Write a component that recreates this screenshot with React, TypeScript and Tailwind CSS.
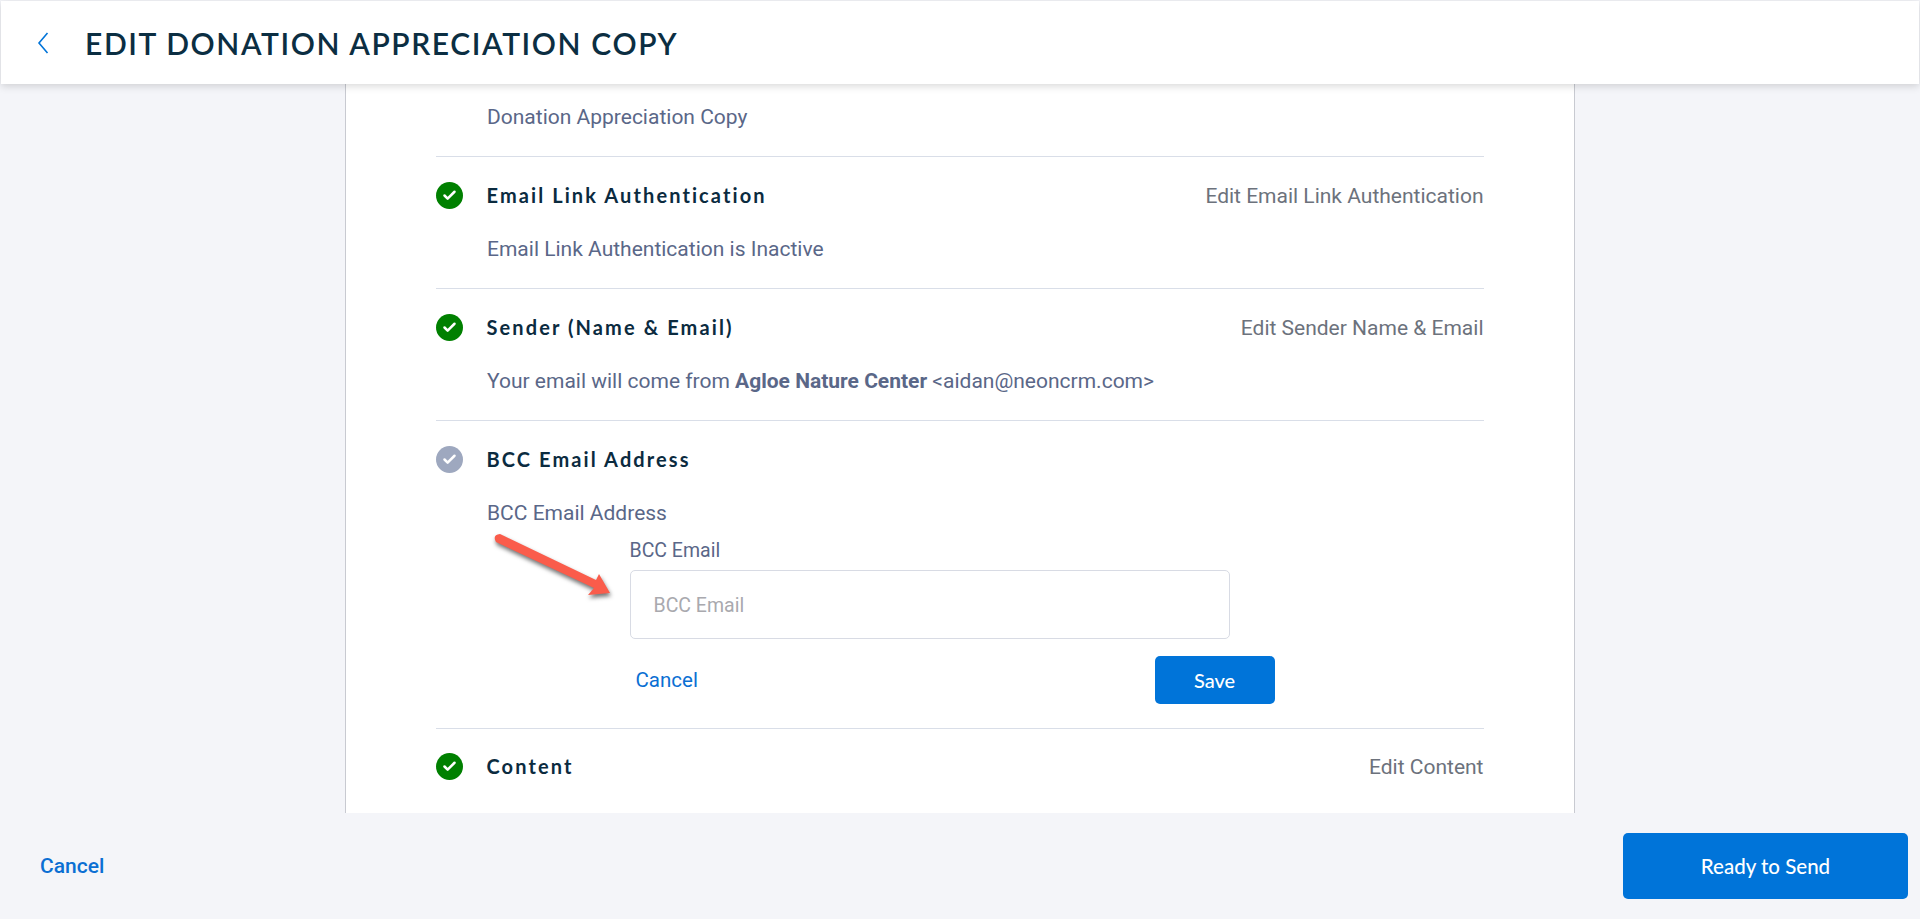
import { Check } from "lucide-react";

function StatusIcon({ muted }: { muted?: boolean }) {
  return (
    <span
      className={`-mt-px flex h-[27px] w-[27px] shrink-0 items-center justify-center rounded-full ${
        muted ? "bg-[#9ea8bf]" : "bg-[#008000]"
      }`}
    >
      <Check className="h-[15px] w-[15px] text-white" strokeWidth={4} />
    </span>
  );
}

function RowHead({ title, edit, muted }: { title: string; edit?: string; muted?: boolean }) {
  return (
    <div className="flex h-[28px] items-center">
      <StatusIcon muted={muted} />
      <h3 className="ml-[24px] pb-[2px] font-['Lato',sans-serif] text-[20px] font-bold tracking-[2.1px] text-[#0b2b3f]">
        {title}
      </h3>
      {edit && <a className="ml-auto pt-[2px] text-[21px] text-[#6c727c]">{edit}</a>}
    </div>
  );
}

function Arrow() {
  return (
    <svg
      className="absolute left-[55px] top-[112px] drop-shadow-[1px_3px_2px_rgba(0,0,0,0.55)]"
      width="126"
      height="70"
      viewBox="0 0 126 70"
      fill="none"
    >
      <path d="M5 9 L103 55 L97 62 L119 60 L108 41 L105 47 L9 1 Q1 2 5 9 Z" fill="#fa5c4b" />
    </svg>
  );
}

export default function App() {
  return (
    <div className="flex h-screen flex-col overflow-hidden bg-[#f4f5f9] font-['Roboto',sans-serif]">
      <header className="relative z-10 mx-px mt-px flex h-[83px] shrink-0 items-center bg-white pl-[36px] shadow-[0_2px_8px_rgba(0,0,0,0.16)]">
        <svg width="12" height="28" viewBox="0 0 12 28" fill="none" className="mt-[1px]">
          <path d="M10.5 4 L2 14 L10.5 24" stroke="#0074d9" strokeWidth="1.6" />
        </svg>
        <h1 className="ml-[36px] pt-px font-['Lato',sans-serif] text-[30px] font-semibold tracking-[1.6px] text-[#0b2e42]">
          EDIT DONATION APPRECIATION COPY
        </h1>
      </header>

      <main className="flex min-h-0 flex-1 justify-center overflow-hidden pr-[1px]">
        <div className="h-full w-[1230px] border-x border-[#c8cad1] bg-white px-[90px]">
          <div className="flex h-[73px] items-end border-b border-[#d9dee8] pb-[27px] pl-[51.5px] text-[21px] leading-[24px] text-[#5a6788]">
            Donation Appreciation Copy
          </div>

          <section className="h-[132px] border-b border-[#d9dee8] pt-[25px]">
            <RowHead title="Email Link Authentication" edit="Edit Email Link Authentication" />
            <p className="mt-[27px] pl-[51.5px] text-[21px] leading-[24px] text-[#5a6788]">
              Email Link Authentication is Inactive
            </p>
          </section>

          <section className="h-[132px] border-b border-[#d9dee8] pt-[25px]">
            <RowHead title="Sender (Name & Email)" edit="Edit Sender Name & Email" />
            <p className="mt-[27px] pl-[51.5px] text-[21px] leading-[24px] text-[#5a6788]">
              Your email will come from <strong className="font-bold">Agloe Nature Center</strong>{" "}
              &lt;aidan@neoncrm.com&gt;
            </p>
          </section>

          <section className="relative h-[308px] border-b border-[#d9dee8] pt-[25px]">
            <RowHead title="BCC Email Address" muted />
            <p className="mt-[27px] pl-[51.5px] text-[21px] leading-[24px] text-[#5a6788]">BCC Email Address</p>
            <Arrow />
            <div className="ml-[194px] mt-[15px] w-[645px]">
              <label className="block text-[19.5px] leading-[22px] text-[#5a6788]">BCC Email</label>
              <input
                placeholder="BCC Email"
                className="mt-[8px] block h-[69px] w-[600px] rounded-[5px] border border-[#d8dbe4] bg-white px-[23px] pt-[2px] text-[19.5px] outline-none placeholder:text-[#a9a9ae]"
              />
              <div className="mt-[17px] flex items-center justify-between">
                <a className="ml-[6px] pt-px text-[20.5px] text-[#0b6fd3]">Cancel</a>
                <button className="h-[48px] w-[120px] rounded-[5px] bg-[#0074d9] font-['Lato',sans-serif] text-[20px] font-medium text-white">
                  Save
                </button>
              </div>
            </div>
          </section>

          <section className="pt-[24px]">
            <RowHead title="Content" edit="Edit Content" />
          </section>
        </div>
      </main>

      <footer className="flex h-[106px] shrink-0 items-center justify-between pl-[40px] pr-[12px]">
        <a className="pt-px text-[21px] font-medium text-[#0b6fd3]">Cancel</a>
        <button className="h-[66px] w-[285px] rounded-[5px] bg-[#0074d9] font-['Lato',sans-serif] text-[20.5px] font-medium text-white">
          Ready to Send
        </button>
      </footer>
    </div>
  );
}
